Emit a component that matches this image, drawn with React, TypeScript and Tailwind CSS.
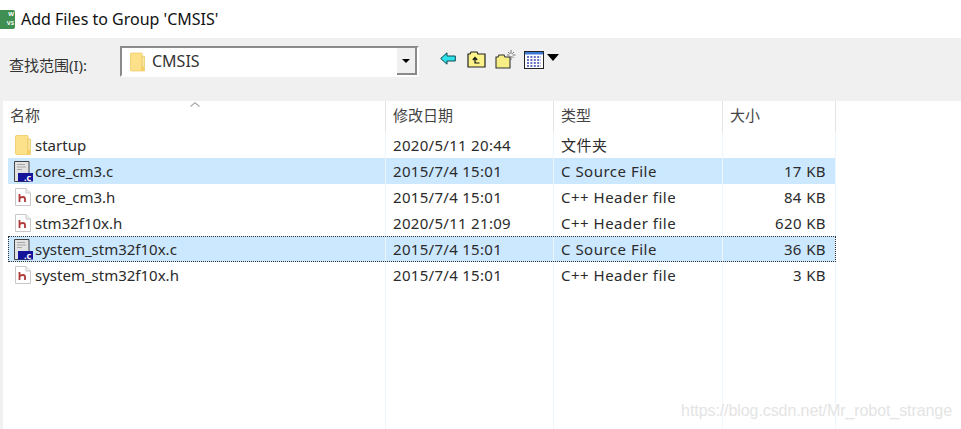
import React from "react";

const columns = ["w-[378px]", "w-[168px]", "w-[169px]", "w-[113px]"];

const files = [
  { name: "startup", date: "2020/5/11 20:44", type: "文件夹", size: "", icon: "folder" },
  { name: "core_cm3.c", date: "2015/7/4 15:01", type: "C Source File", size: "17 KB", icon: "c", selected: true },
  { name: "core_cm3.h", date: "2015/7/4 15:01", type: "C++ Header file", size: "84 KB", icon: "h" },
  { name: "stm32f10x.h", date: "2020/5/11 21:09", type: "C++ Header file", size: "620 KB", icon: "h" },
  { name: "system_stm32f10x.c", date: "2015/7/4 15:01", type: "C Source File", size: "36 KB", icon: "c", selected: true, focused: true },
  { name: "system_stm32f10x.h", date: "2015/7/4 15:01", type: "C++ Header file", size: "3 KB", icon: "h" },
];

function FolderIcon({ className }: { className?: string }) {
  return (
    <svg viewBox="0 0 16 20" className={className}>
      <path d="M0.5 1.5 Q0.5 0.5 1.5 0.5 H12 Q13 0.5 13 1.5 V19.5 H1.5 Q0.5 19.5 0.5 18.5 Z" fill="#fde08a" stroke="#f0d070" />
      <path d="M13 4 H15.5 V19.5 H13 Z" fill="#fbe6a6" stroke="#e9c860" strokeWidth="0.8" />
      <path d="M12 15 H15 V19.5 H12 Z" fill="#f5cf66" />
    </svg>
  );
}

function HeaderFileIcon() {
  return (
    <svg viewBox="0 0 16 18" className="w-4 h-[18px] shrink-0">
      <path d="M0.5 0.5 H11 L15.5 5 V17.5 H0.5 Z" fill="#fff" stroke="#c8c8c8" />
      <path d="M11 0.5 V5 H15.5" fill="#eee" stroke="#c8c8c8" />
      <path d="M4.5 6 V14 M4.5 10.5 Q5.5 9 8 9 Q10 9 10 11 V14" fill="none" stroke="#b03a3a" strokeWidth="1.8" />
    </svg>
  );
}

function SourceFileIcon() {
  return (
    <svg viewBox="0 0 19 21" className="w-[19px] h-[21px] shrink-0">
      <path d="M0.5 0.5 H15 V20.5 H0.5 Z" fill="#e2e2e2" stroke="#444" />
      <path d="M3 3.5 H11 M3 6 H12 M3 8.5 H8" stroke="#a8a8a8" strokeWidth="1" />
      <rect x="4" y="12" width="15" height="8.5" fill="#14149a" />
      <text x="10" y="19.5" fontSize="9" fontWeight="700" fill="#fff">.c</text>
    </svg>
  );
}

function FileIcon({ kind }: { kind: string }) {
  if (kind === "folder") return <FolderIcon className="w-4 h-5 shrink-0" />;
  if (kind === "c") return <SourceFileIcon />;
  return <HeaderFileIcon />;
}

function BackIcon() {
  return (
    <svg viewBox="0 0 16 13" className="w-4 h-[13px]">
      <path d="M0.7 6.5 L7 0.8 V4 H15.3 V9 H7 V12.2 Z" fill="#2ee0e8" stroke="#0a4a50" strokeWidth="1" />
    </svg>
  );
}

function UpFolderIcon() {
  return (
    <svg viewBox="0 0 19 17" className="w-[19px] h-[17px]">
      <path d="M1 16 V3 H3 L4 1 H10 L11 3 H18 V16 Z" fill="#fbf38a" stroke="#222" strokeWidth="1.2" />
      <path d="M12.5 12 H8 V7 M5.8 9 L8 6.5 L10.2 9" fill="none" stroke="#111" strokeWidth="1.2" />
    </svg>
  );
}

function NewFolderIcon() {
  return (
    <svg viewBox="0 0 21 20" className="w-[21px] h-5">
      <path d="M1 19 V8 H3 L4 6 H9 L10 8 H15 V19 Z" fill="#f6ee84" stroke="#333" strokeWidth="1.1" />
      <path d="M16 1 V5 M16 7 V11 M12 6 H14.5 M17.5 6 H20.5 M13 3 L14.7 4.7 M19 3 L17.3 4.7 M13.5 9 L14.8 7.5 M18.7 9 L17.3 7.5" stroke="#666" strokeWidth="0.9" />
    </svg>
  );
}

function ViewIcon() {
  return (
    <svg viewBox="0 0 20 18" className="w-5 h-[18px]">
      <rect x="0.5" y="0.5" width="19" height="17" fill="#fff" stroke="#222" />
      <rect x="1" y="1" width="18" height="2.5" fill="#3d78d8" />
      <path d="M3 6 H17 M3 9 H17 M3 12 H17 M3 15 H17" stroke="#3340b0" strokeWidth="1.3" strokeDasharray="2 1.4" />
    </svg>
  );
}

function Cell({ col, right, children }: { col: number; right?: boolean; children?: React.ReactNode }) {
  return (
    <div className={`${columns[col]} shrink-0 h-full flex items-center border-r border-[#eef6fd] ${right ? "justify-end pr-[9px]" : col === 0 ? "pl-[5px]" : "pl-[7px]"}`}>
      {children}
    </div>
  );
}

function HeaderCell({ col, children }: { col: number; children: React.ReactNode }) {
  return (
    <div className={`${columns[col]} shrink-0 h-full flex items-center border-r border-[#e5e5e5] ${col === 0 ? "pl-[2px]" : "pl-[7px]"}`}>
      <span className="text-[#444] text-[15px] -mt-[2px]">{children}</span>
    </div>
  );
}

export default function App() {
  return (
    <div
      className="relative w-[961px] h-[429px] overflow-hidden bg-white text-[15px] text-[#2b2b2b] flex flex-col"
      style={{ fontFamily: '"Noto Sans", "Noto Sans CJK SC", sans-serif' }}
    >
      {/* title bar */}
      <div className="h-[38px] shrink-0 flex items-center gap-[6px]">
        <div className="w-[15px] h-[19px] bg-[#3f8f52] rounded-r-[2px] text-[6px] leading-[9px] font-bold text-white text-right pr-[1px] overflow-hidden">
          <div>W</div>
          <div>VS</div>
        </div>
        <span className="text-[16px] text-[#111]">Add Files to Group 'CMSIS'</span>
      </div>

      {/* toolbar */}
      <div className="h-[63px] shrink-0 bg-[#f0f0f0] flex items-start pl-[9px] pt-2">
        <div className="w-[111px] shrink-0 pt-[8px] text-[15px] text-[#333]">查找范围(I):</div>
        <div className="w-[299px] h-[31px] shrink-0 flex bg-white border-2 border-r-white border-b-white border-t-[#8a8a8a] border-l-[#8a8a8a]">
          <div className="flex-1 flex items-center gap-[7px] pl-2">
            <FolderIcon className="w-[15px] h-5" />
            <span className="text-[16px] text-[#333] -mt-[2px]">CMSIS</span>
          </div>
          <div className="w-[20px] flex items-center justify-center bg-[#f0f0f0] border-r-2 border-b-2 border-[#8a8a8a]">
            <div className="w-0 h-0 border-x-[4px] border-x-transparent border-t-[4px] border-t-black" />
          </div>
        </div>
        <div className="flex items-start ml-[21px] pt-[6px]">
          <BackIcon />
          <div className="ml-[11px] -mt-[1px]"><UpFolderIcon /></div>
          <div className="ml-[9px] -mt-[3px]"><NewFolderIcon /></div>
          <div className="ml-[8px] -mt-[1px]"><ViewIcon /></div>
          <div className="ml-[3px] mt-[2px] w-0 h-0 border-x-[6px] border-x-transparent border-t-[7px] border-t-black" />
        </div>
      </div>

      {/* list */}
      <div className="flex-1 flex flex-col pl-[5px] border-l-[3px] border-[#f0f0f0]">
        <div className="relative h-[31px] shrink-0 flex">
          <HeaderCell col={0}>名称</HeaderCell>
          <HeaderCell col={1}>修改日期</HeaderCell>
          <HeaderCell col={2}>类型</HeaderCell>
          <HeaderCell col={3}>大小</HeaderCell>
          <svg viewBox="0 0 10 5" className="absolute left-[182px] top-[1px] w-[10px] h-[5px]">
            <path d="M0.5 4.5 L5 0.8 L9.5 4.5" fill="none" stroke="#aaa" strokeWidth="1.2" />
          </svg>
        </div>
        {files.map((f) => (
          <div
            key={f.name}
            className={`h-[26px] shrink-0 flex w-fit ${f.selected ? "bg-[#cce8ff]" : ""} ${f.focused ? "outline-1 outline-dotted outline-[#333] -outline-offset-1" : ""}`}
          >
            <Cell col={0}>
              <div className="w-[20px] flex justify-center"><FileIcon kind={f.icon} /></div>
              <span className="ml-[2px]">{f.name}</span>
            </Cell>
            <Cell col={1}><span className="tracking-[0.3px]">{f.date}</span></Cell>
            <Cell col={2}><span className="tracking-[0.5px]">{f.type}</span></Cell>
            <Cell col={3} right><span className="tracking-[0.4px]">{f.size}</span></Cell>
          </div>
        ))}
        <div className="flex-1 flex">
          <Cell col={0} />
          <Cell col={1} />
          <Cell col={2} />
          <Cell col={3} />
        </div>
      </div>

      {/* watermark */}
      <div className="absolute right-[9px] top-[402px] text-[16px] tracking-[-0.08px] leading-[18px] text-[#e4e4e4]" style={{ fontFamily: '"Liberation Sans", sans-serif' }}>
        https://blog.csdn.net/Mr_robot_strange
      </div>
    </div>
  );
}
